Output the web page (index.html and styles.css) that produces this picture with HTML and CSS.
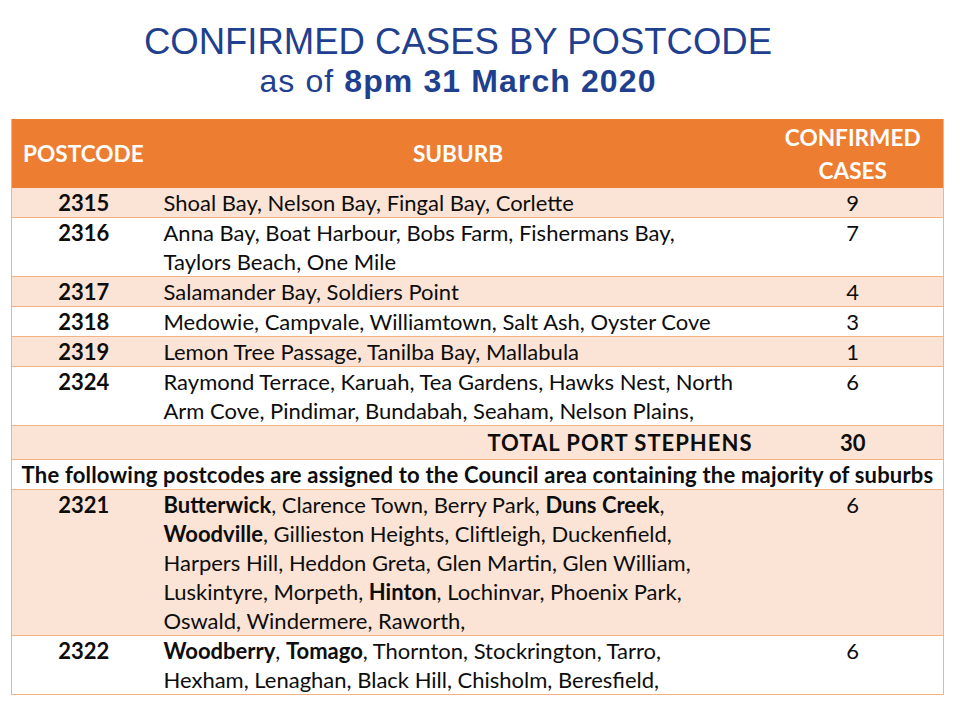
FILE: index.html
```html
<!DOCTYPE html>
<html>
<head>
<meta charset="utf-8">
<link rel="stylesheet" href="styles.css">
</head>
<body>
<div class="title">
  <div class="t1">CONFIRMED CASES BY POSTCODE</div>
  <div class="t2">as of <b>8pm 31 March 2020</b></div>
</div>
<table class="cases">
  <colgroup><col class="c1"><col class="c2"><col class="c3"></colgroup>
  <thead>
    <tr class="head">
      <th class="h-post">POSTCODE</th>
      <th class="h-sub">SUBURB</th>
      <th class="h-num">CONFIRMED<br>CASES</th>
    </tr>
  </thead>
  <tbody>
    <tr class="shade"><td class="pc">2315</td><td class="sub">Shoal Bay, Nelson Bay, Fingal Bay, Corlette</td><td class="num">9</td></tr>
    <tr><td class="pc">2316</td><td class="sub">Anna Bay, Boat Harbour, Bobs Farm, Fishermans Bay,<br>Taylors Beach, One Mile</td><td class="num">7</td></tr>
    <tr class="shade"><td class="pc">2317</td><td class="sub">Salamander Bay, Soldiers Point</td><td class="num">4</td></tr>
    <tr><td class="pc">2318</td><td class="sub">Medowie, Campvale, Williamtown, Salt Ash, Oyster Cove</td><td class="num">3</td></tr>
    <tr class="shade"><td class="pc">2319</td><td class="sub">Lemon Tree Passage, Tanilba Bay, Mallabula</td><td class="num">1</td></tr>
    <tr><td class="pc">2324</td><td class="sub">Raymond Terrace, Karuah, Tea Gardens, Hawks Nest, North<br>Arm Cove, Pindimar, Bundabah, Seaham, Nelson Plains,</td><td class="num">6</td></tr>
    <tr class="shade total"><td></td><td class="tot-label">TOTAL PORT STEPHENS</td><td class="num tot-num">30</td></tr>
    <tr class="note"><td colspan="3">The following postcodes are assigned to the Council area containing the majority of suburbs</td></tr>
    <tr class="shade"><td class="pc">2321</td><td class="sub"><b>Butterwick</b>, Clarence Town, Berry Park, <b>Duns Creek</b>,<br><b>Woodville</b>, Gillieston Heights, Cliftleigh, Duckenfield,<br>Harpers Hill, Heddon Greta, Glen Martin, Glen William,<br>Luskintyre, Morpeth, <b>Hinton</b>, Lochinvar, Phoenix Park,<br>Oswald, Windermere, Raworth,</td><td class="num">6</td></tr>
    <tr><td class="pc">2322</td><td class="sub"><b>Woodberry</b>, <b>Tomago</b>, Thornton, Stockrington, Tarro,<br>Hexham, Lenaghan, Black Hill, Chisholm, Beresfield,</td><td class="num">6</td></tr>
  </tbody>
</table>
</body>
</html>
```
FILE: styles.css
```css
html, body {
  margin: 0;
  padding: 0;
  background: #ffffff;
}

.title {
  padding: 22px 44px 0 0;
  text-align: center;
  color: #1f3f8f;
  font-family: "Liberation Sans", Arial, sans-serif;
}

.t1 {
  font-size: 36.5px;
  line-height: 40px;
}

.t2 {
  font-size: 32px;
  line-height: 38px;
  letter-spacing: 1.1px;
}

.t2 b {
  font-weight: 700;
}

.cases {
  margin: 19px 0 0 11px;
  width: 932px;
  border-collapse: collapse;
  table-layout: fixed;
  font-family: Lato, "Open Sans", sans-serif;
  font-size: 22px;
  color: #0d0d0d;
  border-left: 1px solid #f4b183;
  border-right: 1px solid #f4b183;
}

.c1 { width: 152px; }
.c2 { width: 599px; }
.c3 { width: 181px; }

.head {
  background: #ed7d31;
  color: #ffffff;
  height: 69px;
}

.head th {
  font-weight: 700;
  font-size: 22.6px;
  line-height: 33px;
  padding: 0;
}

.h-post {
  text-align: left;
  padding-left: 11px !important;
}

.h-sub {
  text-align: center;
  padding-right: 10px !important;
}

.h-num {
  text-align: center;
}

.cases td {
  padding: 0;
  line-height: 29px;
  vertical-align: top;
  border-bottom: 1px solid #f4b183;
}

.shade {
  background: #fbe4d5;
}

.pc {
  font-weight: 700;
  text-align: center;
  padding-right: 8px !important;
}

.sub {
  text-align: left;
}

.num {
  text-align: center;
}

.total td {
  line-height: 33px;
  font-weight: 700;
}

.tot-label {
  text-align: right;
  padding-right: 10px !important;
  letter-spacing: 1px;
}

.note td {
  text-align: center;
  font-weight: 700;
  letter-spacing: 0.2px;
}
```
